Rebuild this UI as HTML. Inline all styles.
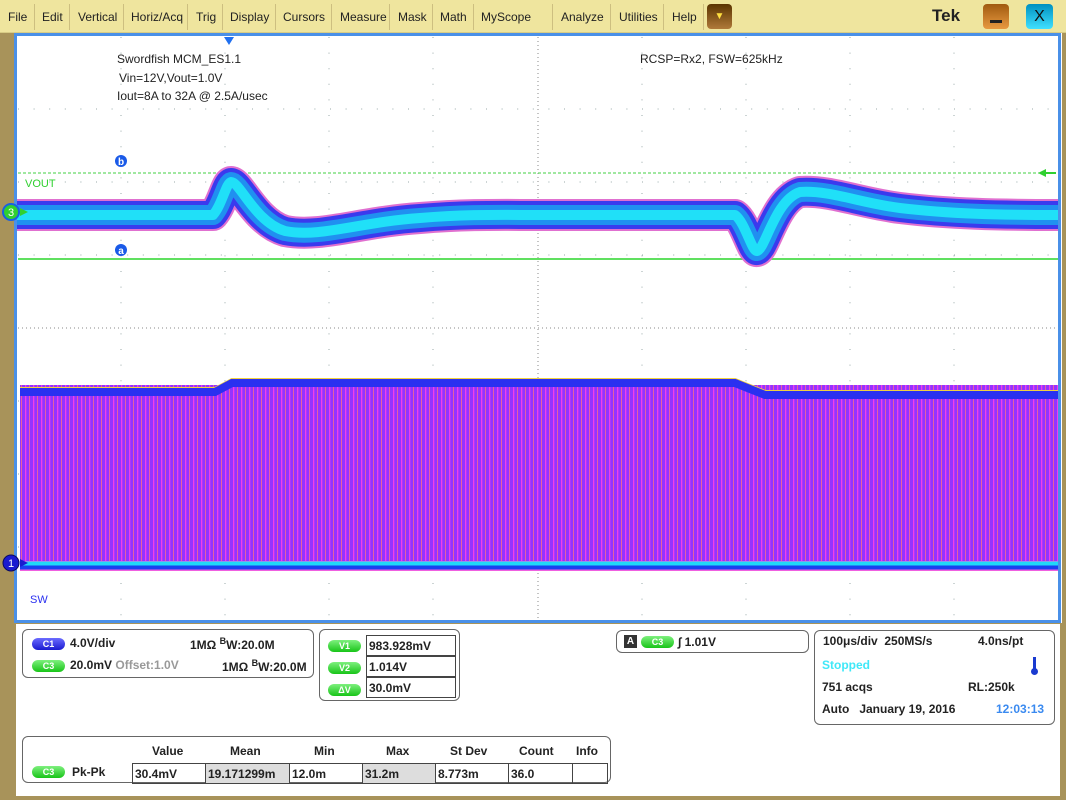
<!DOCTYPE html>
<html><head><meta charset="utf-8"><style>
*{margin:0;padding:0;box-sizing:border-box}
body{width:1066px;height:800px;overflow:hidden;background:#a8935a;font-family:"Liberation Sans",sans-serif;position:relative}
.menu{position:absolute;left:0;top:0;width:1066px;height:33px;background:#efe59e;border-bottom:1px solid #d8cc86}
.menu span.m{position:absolute;top:10px;font-size:12px;color:#222}
.sep{position:absolute;top:4px;width:1px;height:26px;background:#cdbf80}
.t{position:absolute;white-space:nowrap}
.box{position:absolute;border:1px solid #666;border-radius:6px;background:#fff}
.pill{position:absolute;width:33px;height:12px;border-radius:7px;color:#fff;font-size:9px;text-align:center;line-height:12px;font-weight:bold}
.g{background:linear-gradient(#7ef07e,#18c418)}
.b{background:linear-gradient(#6b6bff,#1a1ad0)}
.bold{font-weight:bold;font-size:12px;color:#222}
.cell{position:absolute;border:1px solid #444;height:21px;font-size:12px;font-weight:bold;padding:3px 2px;color:#222}
</style></head><body>
<div class="menu">
<span class="m" style="left:8px">File</span><div class="sep" style="left:34px"></div>
<span class="m" style="left:42px">Edit</span><div class="sep" style="left:69px"></div>
<span class="m" style="left:78px">Vertical</span><div class="sep" style="left:123px"></div>
<span class="m" style="left:131px">Horiz/Acq</span><div class="sep" style="left:187px"></div>
<span class="m" style="left:196px">Trig</span><div class="sep" style="left:222px"></div>
<span class="m" style="left:230px">Display</span><div class="sep" style="left:275px"></div>
<span class="m" style="left:283px">Cursors</span><div class="sep" style="left:331px"></div>
<span class="m" style="left:340px">Measure</span><div class="sep" style="left:389px"></div>
<span class="m" style="left:398px">Mask</span><div class="sep" style="left:432px"></div>
<span class="m" style="left:440px">Math</span><div class="sep" style="left:473px"></div>
<span class="m" style="left:481px">MyScope</span><div class="sep" style="left:552px"></div>
<span class="m" style="left:561px">Analyze</span><div class="sep" style="left:610px"></div>
<span class="m" style="left:619px">Utilities</span><div class="sep" style="left:663px"></div>
<span class="m" style="left:672px">Help</span><div class="sep" style="left:703px"></div>
<div style="position:absolute;left:707px;top:4px;width:25px;height:25px;border-radius:4px;background:linear-gradient(#5a3400,#b07a3a);color:#ffe040;font-size:10px;text-align:center;line-height:25px">▼</div>
<span class="t" style="left:932px;top:6px;font-size:17px;font-weight:bold;color:#222">Tek</span>
<div style="position:absolute;left:983px;top:4px;width:26px;height:25px;border-radius:4px;background:linear-gradient(#a05a10,#e89a40);"><div style="position:absolute;left:7px;top:16px;width:12px;height:3px;background:#222"></div></div>
<div style="position:absolute;left:1026px;top:4px;width:27px;height:25px;border-radius:4px;background:linear-gradient(#0090c0,#40e0ff);color:#111;font-size:16px;text-align:center;line-height:25px">X</div>
</div>

<svg style="position:absolute;left:0;top:33px" width="1066" height="590" viewBox="0 33 1066 590">
<defs>
<pattern id="st" width="8" height="10" patternUnits="userSpaceOnUse">
<rect width="8" height="10" fill="#9433ff"/><rect x="1" width="1.3" height="10" fill="#f040e8"/><rect x="5" width="1" height="10" fill="#e860a0"/>
</pattern>
</defs>
<rect x="14" y="33" width="1048" height="590" fill="#fff"/>
<rect x="15.5" y="34.5" width="1044" height="587" fill="none" stroke="#4a90e8" stroke-width="3"/>
<g stroke="#9aa" stroke-width="1" stroke-dasharray="1,14.6">
<line x1="121" y1="37" x2="121" y2="620"/><line x1="225" y1="37" x2="225" y2="620"/><line x1="329" y1="37" x2="329" y2="620"/><line x1="433" y1="37" x2="433" y2="620"/><line x1="642" y1="37" x2="642" y2="620"/><line x1="746" y1="37" x2="746" y2="620"/><line x1="850" y1="37" x2="850" y2="620"/><line x1="954" y1="37" x2="954" y2="620"/>
<line x1="18" y1="109" x2="1058" y2="109"/><line x1="18" y1="182" x2="1058" y2="182"/><line x1="18" y1="255" x2="1058" y2="255"/><line x1="18" y1="401" x2="1058" y2="401"/><line x1="18" y1="474" x2="1058" y2="474"/><line x1="18" y1="547" x2="1058" y2="547"/>
</g>
<line x1="538" y1="37" x2="538" y2="620" stroke="#888" stroke-dasharray="1,3"/>
<line x1="18" y1="328" x2="1058" y2="328" stroke="#888" stroke-dasharray="1,3"/>
<rect x="20" y="385" width="1038" height="178" fill="url(#st)"/>
<path d="M20,389 H215 L232,380 H735 L765,392 H1058" fill="none" stroke="#f0d040" stroke-width="4"/>
<path d="M20,392 H215 L232,383 H735 L765,395 H1058" fill="none" stroke="#2a30f0" stroke-width="8"/>
<path d="M20,566 H1058" stroke="#f060e0" stroke-width="10"/>
<path d="M20,566 H1058" stroke="#1a40f0" stroke-width="7"/>
<path d="M20,563.5 H1058" stroke="#20d8f8" stroke-width="4"/>
<line x1="18" y1="173" x2="1058" y2="173" stroke="#40d040" stroke-dasharray="3,2"/>
<line x1="18" y1="259" x2="1058" y2="259" stroke="#60e060" stroke-width="2"/>
<g fill="none" stroke-linejoin="round">
<path d="M17,215 H213 C222,205 226,183 231,182 C240,182 255,222 285,231 C320,238 360,222 420,218 C470,214 500,215 540,215 H735 C745,222 752,252 757,251 C765,250 775,200 800,192 C830,190 860,203 900,208 C950,214 1000,215 1058,215" stroke="#e070d0" stroke-width="32"/>
<path d="M17,215 H213 C222,205 226,183 231,182 C240,182 255,222 285,231 C320,238 360,222 420,218 C470,214 500,215 540,215 H735 C745,222 752,252 757,251 C765,250 775,200 800,192 C830,190 860,203 900,208 C950,214 1000,215 1058,215" stroke="#3a3aee" stroke-width="28"/>
<path d="M17,215 H213 C222,205 226,183 231,182 C240,182 255,222 285,231 C320,238 360,222 420,218 C470,214 500,215 540,215 H735 C745,222 752,252 757,251 C765,250 775,200 800,192 C830,190 860,203 900,208 C950,214 1000,215 1058,215" stroke="#2090f0" stroke-width="20"/>
<path d="M17,215 H213 C222,205 226,183 231,182 C240,182 255,222 285,231 C320,238 360,222 420,218 C470,214 500,215 540,215 H735 C745,222 752,252 757,251 C765,250 775,200 800,192 C830,190 860,203 900,208 C950,214 1000,215 1058,215" stroke="#20e0f8" stroke-width="10"/>
</g>
<polygon points="224,37 234,37 229,45" fill="#2070f0"/>
<circle cx="121" cy="161" r="6" fill="#1a5ae8"/><text x="121" y="165" font-size="10" fill="#fff" text-anchor="middle" font-weight="bold" font-family="Liberation Sans">b</text>
<circle cx="121" cy="250" r="6" fill="#1a5ae8"/><text x="121" y="254" font-size="10" fill="#fff" text-anchor="middle" font-weight="bold" font-family="Liberation Sans">a</text>
<text x="25" y="187" font-size="11" fill="#30d030" font-family="Liberation Sans">VOUT</text>
<text x="30" y="603" font-size="11" fill="#2a30f0" font-family="Liberation Sans">SW</text>
<polygon points="1046,177 1038,173 1046,169" fill="#30d030"/><line x1="1046" y1="173" x2="1056" y2="173" stroke="#30d030" stroke-width="2"/>
<circle cx="11" cy="212" r="8" fill="#30d030" stroke="#1a60e0" stroke-width="2"/>
<text x="11" y="216" font-size="11" fill="#fff" text-anchor="middle" font-family="Liberation Sans">3</text>
<polygon points="20,208 28,212 20,216" fill="#30d030"/>
<circle cx="11" cy="563" r="8" fill="#1a1ad0" stroke="#0a0a60" stroke-width="1"/>
<text x="11" y="567" font-size="11" fill="#fff" text-anchor="middle" font-family="Liberation Sans">1</text>
<polygon points="20,559 28,563 20,567" fill="#1a1ad0"/>
<g font-family="Liberation Sans" font-size="12" fill="#222">
<text x="117" y="63">Swordfish MCM_ES1.1</text>
<text x="119" y="82">Vin=12V,Vout=1.0V</text>
<text x="117" y="100">Iout=8A to 32A @ 2.5A/usec</text>
<text x="640" y="63">RCSP=Rx2, FSW=625kHz</text>
</g>
</svg>

<div style="position:absolute;left:16px;top:624px;width:1044px;height:172px;background:#fff"></div>

<div class="box" style="left:22px;top:629px;width:292px;height:49px"></div>
<div class="pill b" style="left:32px;top:638px">C1</div>
<span class="t bold" style="left:70px;top:636px">4.0V/div</span>
<span class="t bold" style="left:190px;top:636px">1MΩ <sup style="font-size:9px">B</sup>W:20.0M</span>
<div class="pill g" style="left:32px;top:660px">C3</div>
<span class="t bold" style="left:70px;top:658px">20.0mV <span style="color:#999">Offset:1.0V</span></span>
<span class="t bold" style="left:222px;top:658px">1MΩ <sup style="font-size:9px">B</sup>W:20.0M</span>

<div class="box" style="left:319px;top:629px;width:141px;height:72px"></div>
<div class="pill g" style="left:328px;top:640px">V1</div>
<div class="cell" style="left:366px;top:635px;width:90px">983.928mV</div>
<div class="pill g" style="left:328px;top:662px">V2</div>
<div class="cell" style="left:366px;top:656px;width:90px">1.014V</div>
<div class="pill g" style="left:328px;top:684px">ΔV</div>
<div class="cell" style="left:366px;top:677px;width:90px">30.0mV</div>

<div class="box" style="left:616px;top:630px;width:193px;height:23px"></div>
<div style="position:absolute;left:624px;top:635px;width:13px;height:13px;background:#333;color:#fff;font-size:10px;text-align:center;line-height:13px;font-weight:bold">A</div>
<div class="pill g" style="left:641px;top:636px;width:33px">C3</div>
<span class="t bold" style="left:678px;top:635px">∫ 1.01V</span>

<div class="box" style="left:814px;top:630px;width:241px;height:95px"></div>
<span class="t bold" style="left:823px;top:634px">100μs/div&nbsp;&nbsp;250MS/s</span>
<span class="t bold" style="left:978px;top:634px">4.0ns/pt</span>
<span class="t bold" style="left:822px;top:658px;color:#40e8f8">Stopped</span>
<div style="position:absolute;left:1033px;top:657px;width:3px;height:14px;background:#1a3ad0"></div>
<div style="position:absolute;left:1031px;top:668px;width:7px;height:7px;border-radius:50%;background:#1a3ad0"></div>
<span class="t bold" style="left:822px;top:680px">751 acqs</span>
<span class="t bold" style="left:968px;top:680px">RL:250k</span>
<span class="t bold" style="left:822px;top:702px">Auto&nbsp;&nbsp;&nbsp;January 19, 2016</span>
<span class="t bold" style="left:996px;top:702px;color:#3a8af0">12:03:13</span>

<div class="box" style="left:22px;top:736px;width:589px;height:47px"></div>
<span class="t bold" style="left:152px;top:744px">Value</span>
<span class="t bold" style="left:230px;top:744px">Mean</span>
<span class="t bold" style="left:314px;top:744px">Min</span>
<span class="t bold" style="left:386px;top:744px">Max</span>
<span class="t bold" style="left:450px;top:744px">St Dev</span>
<span class="t bold" style="left:519px;top:744px">Count</span>
<span class="t bold" style="left:576px;top:744px">Info</span>
<div class="pill g" style="left:32px;top:766px">C3</div>
<span class="t bold" style="left:72px;top:765px">Pk-Pk</span>
<div class="cell" style="left:132px;top:763px;width:74px">30.4mV</div>
<div class="cell" style="left:205px;top:763px;width:85px;background:#ddd">19.171299m</div>
<div class="cell" style="left:289px;top:763px;width:74px">12.0m</div>
<div class="cell" style="left:362px;top:763px;width:74px;background:#ddd">31.2m</div>
<div class="cell" style="left:435px;top:763px;width:74px">8.773m</div>
<div class="cell" style="left:508px;top:763px;width:65px">36.0</div>
<div class="cell" style="left:572px;top:763px;width:36px"></div>
</body></html>
